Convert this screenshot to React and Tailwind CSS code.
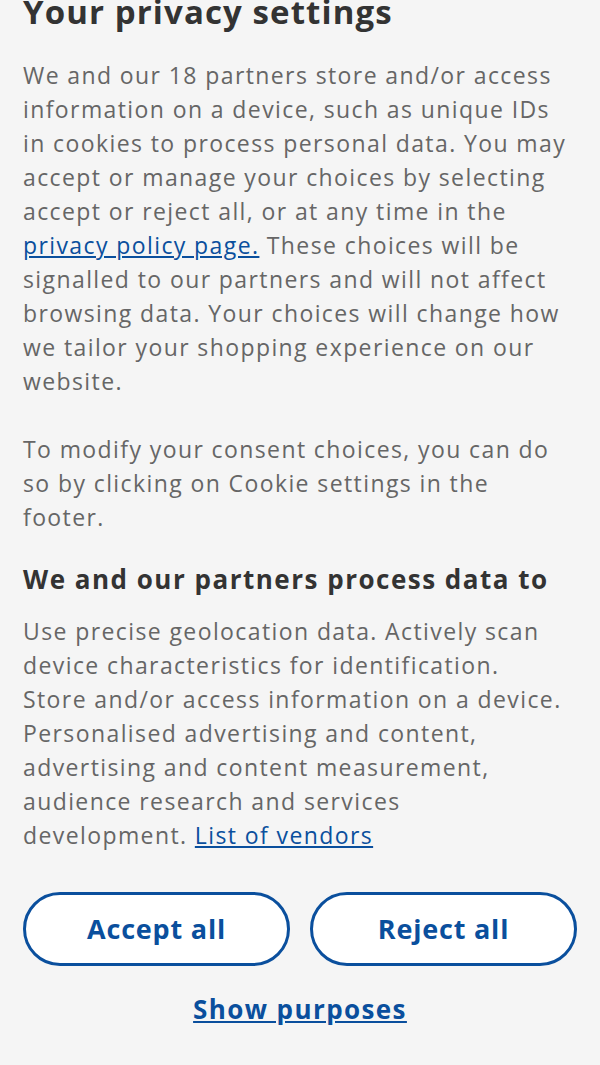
import React from "react";

export default function App() {
  return (
    <div className="min-h-[1065px] w-[600px] bg-[#f5f5f5] overflow-hidden" style={{ fontFamily: "'Open Sans', sans-serif" }}>
      <div className="px-[23px]">
        <h1 className="-mt-[8px] text-[33px] leading-[40px] font-bold tracking-[1.1px] text-[#333]">Your privacy settings</h1>
        <p className="mt-[26px] text-[23px] leading-[34px] tracking-[1.4px] text-[#666]">
          We and our 18 partners store and/or access information on a device, such as unique IDs in cookies to process personal data. You may accept or manage your choices by selecting accept or reject all, or at any time in the{" "}
          <a className="text-[#0a4f9d] underline">privacy policy page.</a> These choices will be signalled to our partners and will not affect browsing data. Your choices will change how we tailor your shopping experience on our website.
        </p>
        <p className="mt-[34px] text-[23px] leading-[34px] tracking-[1.4px] text-[#666]">
          To modify your consent choices, you can do so by clicking on Cookie settings in the footer.
        </p>
        <h2 className="mt-[28px] text-[26px] leading-[34px] font-bold tracking-[1.5px] text-[#333]">We and our partners process data to</h2>
        <p className="mt-[18px] text-[23px] leading-[34px] tracking-[1.4px] text-[#666]">
          Use precise geolocation data. Actively scan device characteristics for identification.
          <br />
          Store and/or access information on a device. Personalised advertising and content, advertising and content measurement, audience research and services
          <br />
          development.{" "}
          <a className="text-[#0a4f9d] underline">List of vendors</a>
        </p>
        <div className="mt-[40px] grid grid-cols-2 gap-[20px]">
          <button className="h-[74px] rounded-full border-[3px] border-[#0a4f9d] bg-white text-[27px] font-bold tracking-[0.8px] text-[#0a4f9d]">Accept all</button>
          <button className="h-[74px] rounded-full border-[3px] border-[#0a4f9d] bg-white text-[27px] font-bold tracking-[0.8px] text-[#0a4f9d]">Reject all</button>
        </div>
        <div className="mt-[26px] flex justify-center">
          <a className="text-[26px] leading-[34px] font-bold tracking-[1.4px] text-[#0a4f9d] underline">Show purposes</a>
        </div>
      </div>
    </div>
  );
}
